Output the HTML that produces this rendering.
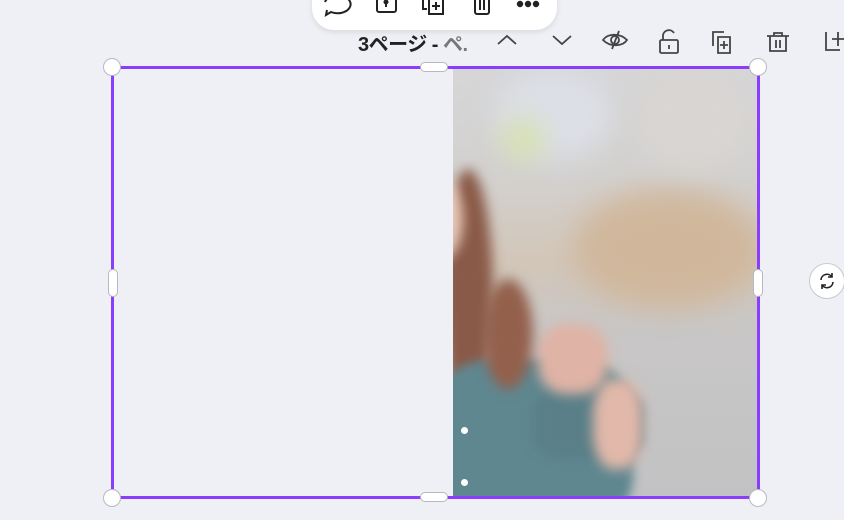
<!DOCTYPE html>
<html><head><meta charset="utf-8"><style>
html,body{margin:0;padding:0;width:844px;height:520px;overflow:hidden;background:#eff0f5;font-family:"Liberation Sans","Noto Sans CJK JP",sans-serif;position:relative}
.abs{position:absolute}
.photo{left:453px;top:69px;width:304px;height:428px;overflow:hidden;background:linear-gradient(180deg,#d6d6d8 0%,#d3d1cf 25%,#d2c6b8 45%,#c9c7c6 60%,#c2c2c4 100%)}
.b{position:absolute;border-radius:50%;filter:blur(14px)}
.frame{left:111px;top:66px;width:643px;height:427px;border:3px solid #8b3dff}
.h{position:absolute;width:18px;height:18px;border-radius:50%;background:#fff;border:1px solid #b8b8c0;box-sizing:border-box}
.pill{position:absolute;background:#fff;border:1px solid #b8b8c0;border-radius:6px;box-sizing:border-box}
svg{position:absolute}
</style></head><body>
<div class="abs photo">
  <div class="b" style="left:40px;top:0;width:120px;height:90px;background:#dcdfe6"></div>
  <div class="b" style="left:50px;top:50px;width:40px;height:40px;background:#d6e2a8"></div>
  <div class="b" style="left:120px;top:120px;width:190px;height:120px;background:#d0b79c"></div>
  <div class="b" style="left:180px;top:0px;width:120px;height:100px;background:#d8d5d2"></div>
  <div class="b" style="left:-10px;top:100px;width:50px;height:250px;background:#8a5a48;filter:blur(6px)"></div>
  <div class="b" style="left:-30px;top:110px;width:40px;height:80px;background:#e8c8b8;filter:blur(6px)"></div>
  <div class="b" style="left:-20px;top:290px;width:200px;height:170px;background:#5f8790;filter:blur(5px);border-radius:30%"></div>
  <div class="b" style="left:80px;top:320px;width:110px;height:70px;background:#5a7f88;filter:blur(5px);border-radius:30%"></div>
  <div class="b" style="left:85px;top:255px;width:70px;height:70px;background:#dfb3a5;filter:blur(6px);border-radius:40%"></div>
  <div class="b" style="left:140px;top:310px;width:50px;height:90px;background:#e1b8a9;filter:blur(6px);border-radius:40%"></div>
  <div class="b" style="left:30px;top:210px;width:50px;height:110px;background:#93604c;filter:blur(6px)"></div>
  <div style="position:absolute;left:8px;top:358px;width:7px;height:7px;border-radius:50%;background:#fff"></div>
  <div style="position:absolute;left:8px;top:410px;width:7px;height:7px;border-radius:50%;background:#fff"></div>
</div>
<div class="abs frame"></div>
<div class="h" style="left:103px;top:58px"></div>
<div class="h" style="left:749px;top:58px"></div>
<div class="h" style="left:103px;top:489px"></div>
<div class="h" style="left:749px;top:489px"></div>
<div class="pill" style="left:420px;top:62px;width:28px;height:10px"></div>
<div class="pill" style="left:420px;top:492px;width:28px;height:10px"></div>
<div class="pill" style="left:108px;top:269px;width:10px;height:28px"></div>
<div class="pill" style="left:753px;top:269px;width:10px;height:28px"></div>
<div class="abs" style="left:809px;top:263px;width:36px;height:36px;border-radius:50%;background:#fff;border:1px solid #c8c8d0;box-sizing:border-box"></div>
<svg style="left:817px;top:271px" width="20" height="20" viewBox="0 0 20 20" fill="none" stroke="#222" stroke-width="1.6"><path d="M4 9a6 6 0 0 1 11-3M16 11a6 6 0 0 1-11 3"/><path d="M15 2v4h-4M5 18v-4h4"/></svg>
<div class="abs" style="left:312px;top:-20px;width:245px;height:50px;background:#fff;border-radius:22px;box-shadow:0 2px 6px rgba(0,0,0,.1)"></div>
<svg style="left:322px;top:-6px" width="230" height="26" viewBox="0 0 230 26" fill="none" stroke="#222" stroke-width="2">
<path d="M3 8a13 9 0 1 1 6 10l-5 3 1-5"/>
<rect x="55" y="-2" width="19" height="20" rx="2"/><path d="M64 8v5"/><circle cx="64" cy="8" r="1.5" fill="#222"/>
<path d="M101 -2v17h4M107 4h14v16h-14zM114 8v8M110 12h8"/>
<path d="M153 2h14v16a2 2 0 0 1-2 2h-10a2 2 0 0 1-2-2zM158 6v10M162 6v10"/>
<circle cx="198" cy="10" r="2.2" fill="#222"/><circle cx="206" cy="10" r="2.2" fill="#222"/><circle cx="214" cy="10" r="2.2" fill="#222"/>
</svg>
<div class="abs" style="left:358px;top:28px;font-size:20px;font-weight:bold;color:#222;letter-spacing:-0.5px">3ページ - <span style="color:#777">ペ.</span></div>
<svg style="left:495px;top:28px" width="349" height="26" viewBox="0 0 349 26" fill="none" stroke="#444" stroke-width="1.8">
<path d="M3 16l9-8 9 8"/><path d="M58 8l9 8 9-8"/>
<path d="M108 12c4-6 16-8 24 0c-4 6-16 8-24 0z"/><circle cx="120" cy="12" r="4"/><path d="M124 3l-7 18"/>
<rect x="165" y="12" width="18" height="13" rx="1.5"/><path d="M168 12v-5a6 6 0 0 1 11-2"/><path d="M174 17v4"/>
<path d="M218 18v-14h11M223 9h12v16h-12zM229 13v8M225 17h8"/>
<path d="M272 8h22M279 8v-3h8v3M275 8v15h16v-15M281 12v8M285 12v8"/>
<path d="M331 4v18h14M337 11h12M343 4v14"/>
</svg>
</body></html>
